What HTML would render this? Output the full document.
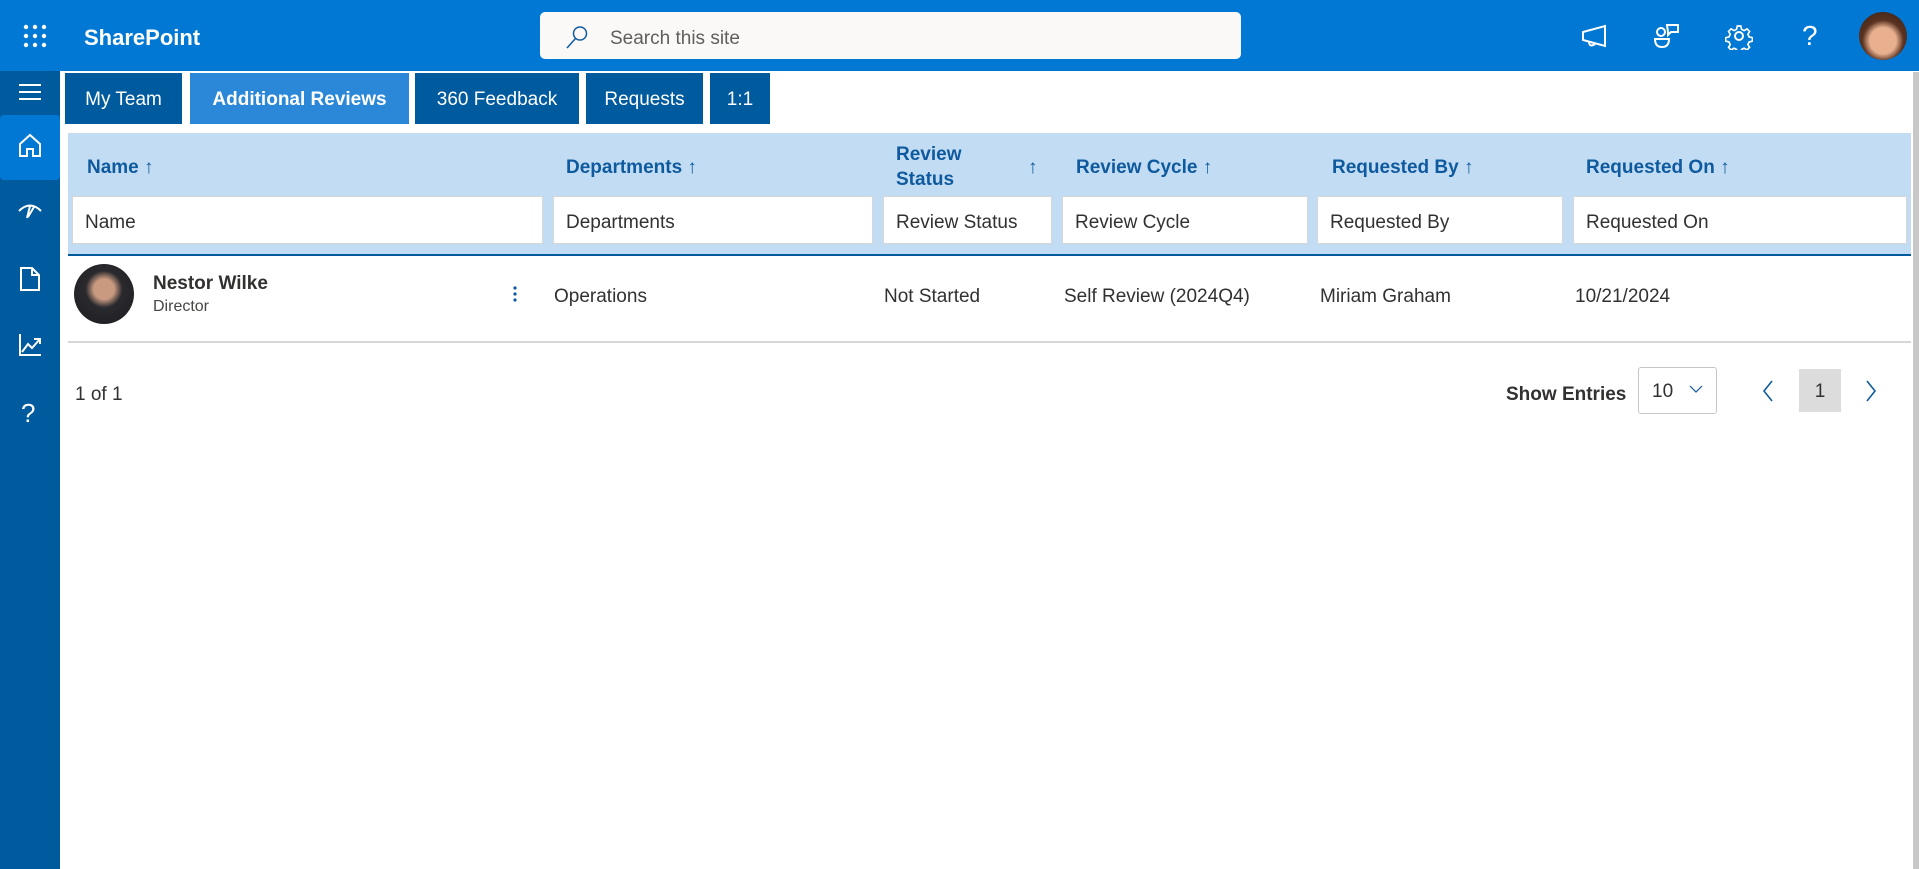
<!DOCTYPE html>
<html><head><meta charset="utf-8"><style>
*{box-sizing:border-box;margin:0;padding:0}
body{width:1919px;height:869px;overflow:hidden;background:#fff;font-family:"Liberation Sans",sans-serif;color:#323130;position:relative}
.abs{position:absolute}
.top{left:0;top:0;width:1919px;height:71px;background:#0078d4}
.rail{left:0;top:71px;width:60px;height:798px;background:#005a9e}
.sel{left:0;top:115px;width:60px;height:65px;background:#0078d4;border-radius:4px}
.tab{position:absolute;top:73px;height:51px;background:#005a9e;color:#fff;font-size:19px;line-height:53px;text-align:center}
.hdr{left:68px;top:133px;width:1843px;height:123px;background:#c2ddf3;border-bottom:2px solid #005a9e}
.hl{position:absolute;color:#0f5a9e;font-size:19px;font-weight:bold;top:157px}
.inp{position:absolute;top:196px;height:48px;background:#fff;border:1px solid #d6d6d6;font-size:19px;line-height:51px;padding-left:12px;color:#323130}
.cell{position:absolute;top:286px;font-size:19px;color:#323130}
</style></head><body>
<div class="abs top"></div>
<svg class="abs" style="left:23px;top:24px" width="26" height="26" fill="#fff"><circle cx="3" cy="3" r="2.2"/><circle cx="12" cy="3" r="2.2"/><circle cx="21" cy="3" r="2.2"/><circle cx="3" cy="12" r="2.2"/><circle cx="12" cy="12" r="2.2"/><circle cx="21" cy="12" r="2.2"/><circle cx="3" cy="21" r="2.2"/><circle cx="12" cy="21" r="2.2"/><circle cx="21" cy="21" r="2.2"/></svg>
<div class="abs" style="left:84px;top:25px;color:#fff;font-size:22px;font-weight:bold">SharePoint</div>
<div class="abs" style="left:540px;top:12px;width:701px;height:47px;background:#faf9f8;border-radius:5px"></div>
<svg class="abs" style="left:565px;top:25px" width="24" height="24" fill="none" stroke="#0f5a9e" stroke-width="1.5"><circle cx="15" cy="8.5" r="6.5"/><path d="M10.5 13.5 L2 23"/></svg>
<div class="abs" style="left:610px;top:28px;font-size:19px;color:#605e5c">Search this site</div>
<svg class="abs" style="left:1580px;top:22px" width="30" height="28" fill="none" stroke="#fff" stroke-width="2"><path d="M3 10 L25 4 V24 L3 18 Z M9 19 Q9 26 15 22"/></svg>
<svg class="abs" style="left:1653px;top:22px" width="30" height="28" fill="none" stroke="#fff" stroke-width="2"><circle cx="8" cy="10" r="4"/><path d="M2 17 H16 Q16 25 9 25 Q2 25 2 17Z M14 3 H25 V10 H18 L15 13 V10 Z"/></svg>
<svg class="abs" style="left:1725px;top:22px" width="28" height="28" fill="none" stroke="#fff" stroke-width="2"><circle cx="14" cy="14" r="4"/><path d="M12 2h4l1 4 3 1.5 3.5-2 3 3-2 3.5 1.5 3 4 1v4l-4 1-1.5 3 2 3.5-3 3-3.5-2-3 1.5-1 4h-4l-1-4-3-1.5-3.5 2-3-3 2-3.5-1.5-3-4-1v-4l4-1 1.5-3-2-3.5 3-3 3.5 2 3-1.5z" transform="translate(2.3 2.3) scale(.84)"/></svg>
<div class="abs" style="left:1802px;top:20px;color:#fff;font-size:28px">?</div>
<div class="abs" style="left:1859px;top:12px;width:48px;height:48px;border-radius:50%;background:radial-gradient(circle at 50% 60%,#e8b08f 0 35%,#5a3220 55%,#3a2014 100%)"></div>
<div class="abs rail"></div>
<div class="abs" style="left:1913px;top:72px;width:6px;height:797px;background:#c8c8c8"></div>
<div class="abs sel"></div>
<svg class="abs" style="left:18px;top:82px" width="24" height="20" stroke="#fff" stroke-width="2"><path d="M1 3H23M1 10H23M1 17H23"/></svg>
<svg class="abs" style="left:18px;top:133px" width="24" height="26" fill="none" stroke="#fff" stroke-width="2"><path d="M2 11 L12 2 L22 11 V23 H15 V16 H9 V23 H2 Z"/></svg>
<svg class="abs" style="left:17px;top:202px" width="26" height="18" fill="none" stroke="#fff" stroke-width="2"><path d="M2 9 Q13 -2 24 9 M13 4 L10 16 M17 5 L11 15"/></svg>
<svg class="abs" style="left:19px;top:266px" width="22" height="26" fill="none" stroke="#fff" stroke-width="2"><path d="M2 2 H13 L20 9 V24 H2 Z M13 2 V9 H20"/></svg>
<svg class="abs" style="left:18px;top:333px" width="24" height="24" fill="none" stroke="#fff" stroke-width="2"><path d="M2 1 V22 H23 M4 19 L10 11 L14 15 L22 6 M16 6 H22 V11"/></svg>
<div class="abs" style="left:21px;top:398px;color:#fff;font-size:26px">?</div>
<div class="tab" style="left:65px;width:117px">My Team</div>
<div class="tab" style="left:190px;width:219px;background:#2b88d8;font-weight:bold">Additional Reviews</div>
<div class="tab" style="left:415px;width:164px">360 Feedback</div>
<div class="tab" style="left:586px;width:117px">Requests</div>
<div class="tab" style="left:710px;width:60px">1:1</div>
<div class="abs hdr"></div>
<div class="hl" style="left:87px">Name ↑</div>
<div class="hl" style="left:566px">Departments ↑</div>
<div class="hl" style="left:896px;top:142px;line-height:25px">Review<br>Status</div>
<div class="hl" style="left:1028px;font-weight:normal">↑</div>
<div class="hl" style="left:1076px">Review Cycle ↑</div>
<div class="hl" style="left:1332px">Requested By ↑</div>
<div class="hl" style="left:1586px">Requested On ↑</div>
<div class="inp" style="left:72px;width:471px">Name</div>
<div class="inp" style="left:553px;width:320px">Departments</div>
<div class="inp" style="left:883px;width:169px">Review Status</div>
<div class="inp" style="left:1062px;width:246px">Review Cycle</div>
<div class="inp" style="left:1317px;width:246px">Requested By</div>
<div class="inp" style="left:1573px;width:334px">Requested On</div>
<div class="abs" style="left:74px;top:264px;width:60px;height:60px;border-radius:50%;background:radial-gradient(circle at 50% 42%,#c99a80 0 22%,#2a2a2e 40%,#1c1c20 100%)"></div>
<div class="abs" style="left:153px;top:273px;font-size:19px;font-weight:bold;color:#323130">Nestor Wilke</div>
<div class="abs" style="left:153px;top:298px;font-size:16px;color:#484644">Director</div>
<svg class="abs" style="left:512px;top:285px" width="6" height="18" fill="#0f5a9e"><circle cx="3" cy="3" r="1.6"/><circle cx="3" cy="9" r="1.6"/><circle cx="3" cy="15" r="1.6"/></svg>
<div class="cell" style="left:554px">Operations</div>
<div class="cell" style="left:884px">Not Started</div>
<div class="cell" style="left:1064px">Self Review (2024Q4)</div>
<div class="cell" style="left:1320px">Miriam Graham</div>
<div class="cell" style="left:1575px">10/21/2024</div>
<div class="abs" style="left:68px;top:341px;width:1843px;height:2px;background:#d6d6d6"></div>
<div class="abs" style="left:75px;top:384px;font-size:19px">1 of 1</div>
<div class="abs" style="left:1506px;top:384px;font-size:19px;font-weight:bold">Show Entries</div>
<div class="abs" style="left:1638px;top:367px;width:79px;height:47px;border:1px solid #c8c6c4;border-radius:3px"></div>
<div class="abs" style="left:1652px;top:381px;font-size:19px">10</div>
<svg class="abs" style="left:1689px;top:384px" width="14" height="10" fill="none" stroke="#0f5a9e" stroke-width="1.2"><path d="M1 2 L7 8 L13 2"/></svg>
<svg class="abs" style="left:1762px;top:379px" width="12" height="24" fill="none" stroke="#0f5a9e" stroke-width="1.6"><path d="M10 2 L2 12 L10 22"/></svg>
<div class="abs" style="left:1799px;top:369px;width:42px;height:43px;background:#dcdcdc;text-align:center;line-height:45px;font-size:19px">1</div>
<svg class="abs" style="left:1865px;top:379px" width="12" height="24" fill="none" stroke="#0f5a9e" stroke-width="1.6"><path d="M2 2 L10 12 L2 22"/></svg>
</body></html>
